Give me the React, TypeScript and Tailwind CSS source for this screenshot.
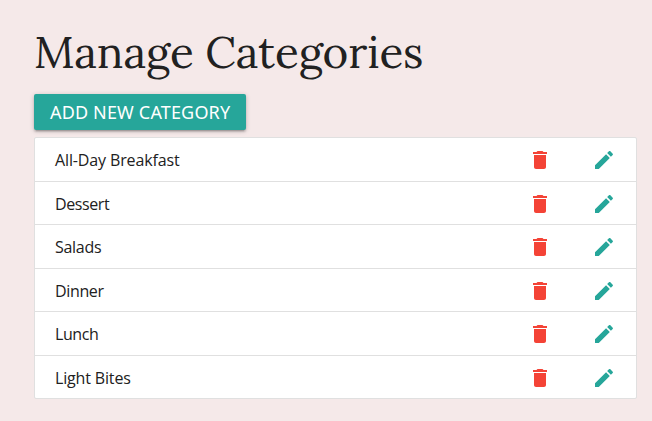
const categories = [
  { name: 'All-Day Breakfast', spacing: 'tracking-[-0.13px]' },
  { name: 'Dessert', spacing: 'tracking-[-0.4px]' },
  { name: 'Salads', spacing: 'tracking-[-0.3px]' },
  { name: 'Dinner', spacing: 'tracking-[-0.35px]' },
  { name: 'Lunch', spacing: 'tracking-[-0.4px]' },
  { name: 'Light Bites', spacing: 'tracking-[-0.16px]' },
];

function DeleteIcon() {
  return (
    <svg viewBox="0 0 24 24" className="size-6 fill-[#f44336]">
      <path d="M6 19c0 1.1.9 2 2 2h8c1.1 0 2-.9 2-2V7H6v12zM19 4h-3.500l-1-1h-5l-1 1H5v2h14V4z" />
    </svg>
  );
}

function EditIcon() {
  return (
    <svg viewBox="0 0 24 24" className="size-6 fill-[#26a69a]">
      <path d="M3 17.250V21h3.750L17.810 9.940l-3.750-3.750L3 17.250zM20.710 7.040c.39-.39.39-1.020 0-1.410l-2.340-2.340c-.39-.39-1.020-.39-1.410 0l-1.830 1.830 3.750 3.750 1.830-1.830z" />
    </svg>
  );
}

export default function App() {
  return (
    <main className="h-[421px] w-[652px] overflow-hidden bg-[#f5e9e9] pt-[25px] pr-[15px] pl-[34px] font-['Open_Sans','Noto_Sans',sans-serif] text-[#212121]">
      <h1 className="h-[69px] whitespace-nowrap font-['Lora','Liberation_Serif',serif] text-[44px] leading-[54px] tracking-[-0.13px]">
        Manage Categories
      </h1>
      <button className="flex h-9 w-[212px] items-center whitespace-nowrap rounded-[2px] bg-[#26a69a] pt-px pl-4 font-['Noto_Sans',sans-serif] text-[18px] tracking-[0.16px] text-white shadow-[0_2px_2px_0_rgba(0,0,0,0.14),0_3px_1px_-2px_rgba(0,0,0,0.12),0_1px_5px_0_rgba(0,0,0,0.2)]">
        ADD NEW CATEGORY
      </button>
      <ul className="mt-[7px] rounded-[2px] border border-[#e0e0e0] bg-white">
        {categories.map((category) => (
          <li
            key={category.name}
            className="flex h-[43.5px] border-b border-[#e0e0e0] pt-[10px] pr-5 pl-5 last:h-[42.5px] last:border-b-0"
          >
            <span className={`flex-1 text-[16px] leading-6 ${category.spacing}`}>{category.name}</span>
            <a className="mr-10 h-6" aria-label="Delete"><DeleteIcon /></a>
            <a className="h-6" aria-label="Edit"><EditIcon /></a>
          </li>
        ))}
      </ul>
    </main>
  );
}
